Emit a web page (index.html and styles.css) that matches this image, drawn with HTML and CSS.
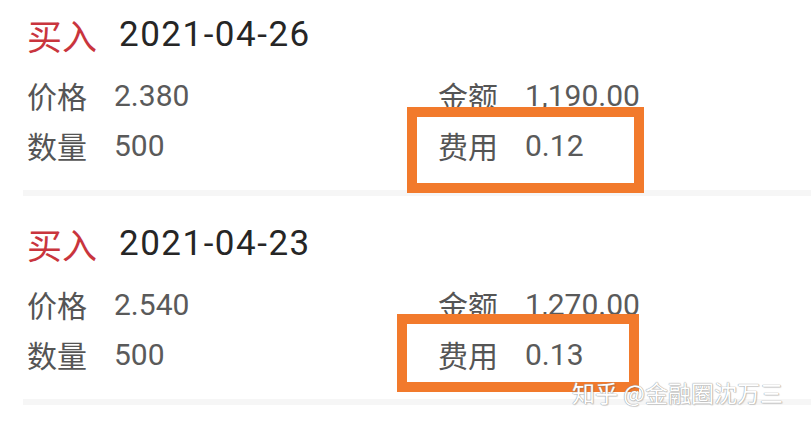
FILE: index.html
```html
<!DOCTYPE html>
<html lang="zh-CN">
<head>
  <meta charset="UTF-8" />
  <meta name="viewport" content="width=device-width, initial-scale=1.0"/>
  <title>成交记录</title>
  <link rel="stylesheet" href="styles.css">
</head>
<body>

  <div class="record first">
    <div class="head">
      <span class="side">买入</span>
      <span class="date">2021-04-26</span>
    </div>
    <div class="fields">
      <div class="field"><span class="label">价格</span><span class="value">2.380</span></div>
      <div class="field"><span class="label">金额</span><span class="value">1,190.00</span></div>
      <div class="field"><span class="label">数量</span><span class="value">500</span></div>
      <div class="field"><span class="label">费用</span><span class="value">0.12</span></div>
    </div>
    <div class="mark mark-1"></div>
  </div>
  <div class="sep"></div>

  <div class="record">
    <div class="head">
      <span class="side">买入</span>
      <span class="date">2021-04-23</span>
    </div>
    <div class="fields">
      <div class="field"><span class="label">价格</span><span class="value">2.540</span></div>
      <div class="field"><span class="label">金额</span><span class="value">1,270.00</span></div>
      <div class="field"><span class="label">数量</span><span class="value">500</span></div>
      <div class="field"><span class="label">费用</span><span class="value">0.13</span></div>
    </div>
    <div class="mark mark-2"></div>
  </div>
  <div class="sep"></div>

  <div class="watermark">知乎 @金融圈沈万三</div>

</body>
</html>
```

FILE: styles.css
```css
body, html {
  margin: 0;
  padding: 0;
  height: 100%;
  overflow: hidden;
  background: #fff;
  font-family: Roboto, "Noto Sans CJK SC", sans-serif;
}

body {
  position: relative;
}

.record {
  position: relative;
  padding: 25px 0 20px 27px;
}

.record.first {
  padding-top: 12px;
}

.head {
  display: flex;
  align-items: center;
  gap: 22px;
  height: 44px;
  font-size: 35px;
  margin-bottom: 14px;
}

.side {
  color: #c9353d;
}

.date {
  color: #262626;
  letter-spacing: 1.5px;
}

.fields {
  display: grid;
  grid-template-columns: 411px 1fr;
}

.field {
  display: flex;
  align-items: center;
  gap: 27px;
  height: 50px;
  font-size: 30px;
  color: #5a5a5a;
}

.label {
  color: #555;
}

.sep {
  margin-left: 23px;
  height: 6px;
  background: #f6f6f6;
}

/* hand-drawn highlight boxes */
.mark {
  position: absolute;
  border: 10px solid #f27a2c;
  box-sizing: border-box;
}

.mark-1 {
  left: 407px;
  top: 107px;
  width: 237px;
  height: 86px;
}

.mark-2 {
  left: 397px;
  top: 118px;
  width: 242px;
  height: 78px;
}

.watermark {
  position: absolute;
  left: 572px;
  top: 375px;
  font-family: "Noto Sans CJK SC", sans-serif;
  font-size: 23px;
  color: #fff;
  white-space: nowrap;
  text-shadow: 0 0 1px #999, 0 0 1px #999, 1px 1px 1px rgba(0,0,0,0.15);
}
```
